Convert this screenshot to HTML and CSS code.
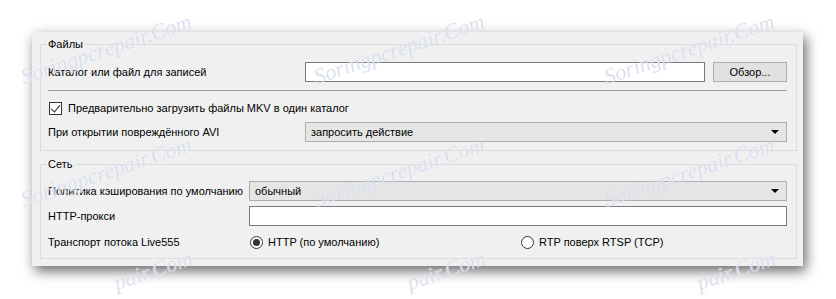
FILE: index.html
```html
<!DOCTYPE html>
<html lang="ru">
<head>
    <meta charset="UTF-8">
    <meta name="viewport" content="width=device-width, initial-scale=1.0">
    <title>Настройки ввода / кодеков</title>
    <link rel="stylesheet" href="styles.css">
</head>
<body>
    <div class="panel">
        <!-- Files -->
        <fieldset class="group group-files">
            <legend>Файлы</legend>

            <div class="row">
                <span class="label">Каталог или файл для записей</span>
                <input class="text-input" type="text">
                <button class="btn">Обзор...</button>
            </div>

            <div class="separator"></div>

            <label class="check-row">
                <span class="checkbox checked"></span>
                Предварительно загрузить файлы MKV в один каталог
            </label>

            <div class="row row-avi">
                <span class="label">При открытии повреждённого AVI</span>
                <div class="combo">запросить действие</div>
            </div>
        </fieldset>

        <!-- Network -->
        <fieldset class="group group-net">
            <legend>Сеть</legend>

            <div class="row">
                <span class="label">Политика кэширования по умолчанию</span>
                <div class="combo">обычный</div>
            </div>

            <div class="row row-proxy">
                <span class="label">HTTP-прокси</span>
                <input class="text-input" type="text">
            </div>

            <div class="row row-radio">
                <span class="label">Транспорт потока Live555</span>
                <div class="radio-group">
                    <span class="radio-item"><span class="radio checked"></span>HTTP (по умолчанию)</span>
                    <span class="radio-item"><span class="radio"></span>RTP поверх RTSP (TCP)</span>
                </div>
            </div>
        </fieldset>
    </div>

    <!-- watermark overlay -->
    <div class="watermarks">
        <span class="wm" style="left:25px;top:66px">Soringpcrepair.Com</span>
        <span class="wm" style="left:318px;top:66px">Soringpcrepair.Com</span>
        <span class="wm" style="left:608px;top:66px">Soringpcrepair.Com</span>
        <span class="wm" style="left:25px;top:189px">Soringpcrepair.Com</span>
        <span class="wm" style="left:318px;top:189px">Soringpcrepair.Com</span>
        <span class="wm" style="left:608px;top:189px">Soringpcrepair.Com</span>
        <span class="wm" style="left:118px;top:272px">pair.Com</span>
        <span class="wm" style="left:411px;top:272px">pair.Com</span>
        <span class="wm" style="left:701px;top:272px">pair.Com</span>
    </div>
</body>
</html>
```

FILE: styles.css
```css
* {
    margin: 0;
    padding: 0;
    box-sizing: border-box;
}

body {
    background: #fff;
    font-family: "Liberation Sans", Arial, sans-serif;
    font-size: 11px;
    line-height: 16px;
    color: #000;
    overflow: hidden;
    position: relative;
    height: 299px;
}

.panel {
    margin: 32px 0 0 32px;
    width: 771px;
    height: 234px;
    background: #f0f0f0;
    padding: 4px 6px 0 8px;
    box-shadow: 3px 5px 12px rgba(0, 0, 0, 0.6);
}

/* Group boxes */
.group {
    border: 1px solid #dcdcdc;
    padding: 10px 9px 8px 7px;
}

.group legend {
    padding: 0 2px;
    margin-left: -2px;
    line-height: 16px;
}

.group-net {
    margin-top: 5px;
    padding-top: 9px;
}

.row {
    display: flex;
    align-items: center;
    height: 20px;
    white-space: nowrap;
}

.group-files .label {
    width: 257px;
    flex: none;
}

.group-net .label {
    width: 201px;
    flex: none;
}

.text-input {
    flex: 1;
    height: 20px;
    border: 1px solid #7a7a7a;
    background: #fff;
    outline: none;
}

.btn {
    width: 74px;
    height: 20px;
    margin-left: 8px;
    border: 1px solid #adadad;
    background: #e1e1e1;
    font: inherit;
    color: #000;
}

.separator {
    height: 1px;
    background: #a0a0a0;
    margin: 8px 0 9px;
}

.check-row {
    display: flex;
    align-items: center;
    height: 16px;
    white-space: nowrap;
}

.checkbox {
    width: 13px;
    height: 13px;
    border: 1px solid #333;
    background: #fff;
    margin: 0 6px 0 1px;
    position: relative;
}

.checkbox.checked::after {
    content: "";
    position: absolute;
    left: 3px;
    top: 0px;
    width: 4px;
    height: 8px;
    border-right: 1.5px solid #222;
    border-bottom: 1.5px solid #222;
    transform: rotate(40deg);
}

.row-avi {
    margin-top: 6px;
}

.combo {
    flex: 1;
    height: 20px;
    border: 1px solid #adadad;
    background: #e5e5e5;
    padding: 1px 0 0 5px;
    position: relative;
}

.combo::after {
    content: "";
    position: absolute;
    right: 7px;
    top: 7px;
    border-left: 4px solid transparent;
    border-right: 4px solid transparent;
    border-top: 4px solid #000;
}

.row-proxy {
    margin-top: 5px;
}

.row-radio {
    margin-top: 8px;
    height: 16px;
}

.radio-group {
    display: grid;
    grid-template-columns: 271px 1fr;
    flex: 1;
}

.radio-item {
    display: flex;
    align-items: center;
}

.radio {
    width: 13px;
    height: 13px;
    border: 1px solid #333;
    border-radius: 50%;
    background: #fff;
    margin: 0 5px 0 1px;
    position: relative;
}

.radio.checked::after {
    content: "";
    position: absolute;
    left: 2px;
    top: 2px;
    width: 7px;
    height: 7px;
    border-radius: 50%;
    background: #333;
}

/* Watermarks */
.watermarks {
    position: absolute;
    inset: 0;
    pointer-events: none;
}

.wm {
    position: absolute;
    font-family: "Liberation Serif", serif;
    font-style: italic;
    font-size: 22px;
    line-height: 22px;
    white-space: nowrap;
    color: rgba(150, 165, 210, 0.35);
    text-shadow: 0 0 1px #fff;
    transform: rotate(-18.5deg);
    transform-origin: left bottom;
}
```
